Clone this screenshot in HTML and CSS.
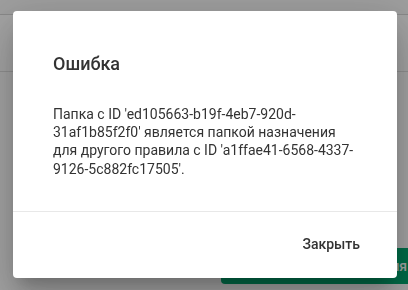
FILE: index.html
```html
<!DOCTYPE html>
<html>
<head>
	<meta charset="utf-8">
	<title>Ошибка</title>
	<link rel="stylesheet" href="styles.css">
</head>
<body>
	<div class="page">
		<div class="top-bar"></div>
		<div class="toolbar"></div>
		<div class="content"></div>
		<div class="page-actions">
			<button class="save-btn">Сохранить изменения</button>
		</div>
	</div>

	<div class="overlay">
		<div class="dialog">
			<h2 class="dialog-title">Ошибка</h2>
			<div class="dialog-body">
				Папка с ID 'ed105663-b19f-4eb7-920d-<wbr>31af1b85f2f0' является папкой назначения для другого правила с ID 'a1ffae41-6568-4337-<wbr>9126-5c882fc17505'.
			</div>
			<div class="dialog-actions">
				<button class="close-btn">Закрыть</button>
			</div>
		</div>
	</div>
</body>
</html>
```

FILE: styles.css
```css
html, body {
	margin: 0;
	height: 100%;
	overflow: hidden;
}
body {
	font-family: Roboto, "Liberation Sans", sans-serif;
	background: #fff;
}

.page {
	height: 100%;
	display: flex;
	flex-direction: column;
}
.top-bar {
	height: 14px;
	background: #f7f7f7;
	border-bottom: 1px solid #d6d6d6;
}
.toolbar {
	height: 56px;
	border-bottom: 1px solid #e0e0e0;
}
.content {
	height: 176px;
}
.page-actions {
	display: flex;
	padding-left: 221px;
}
.save-btn {
	flex: none;
	width: 187px;
	height: 36px;
	border: 0;
	border-radius: 4px 0 0 4px;
	background: #00a870;
	color: #fff;
	font-family: Roboto, sans-serif;
	font-size: 14px;
	font-weight: 500;
	text-align: right;
	padding: 0 1px 0 0;
	white-space: nowrap;
}

.overlay {
	position: fixed;
	inset: 0;
	background: rgba(0, 0, 0, 0.36);
}
.dialog {
	position: absolute;
	left: 13px;
	top: 11px;
	width: 384px;
	background: #fff;
	border-radius: 4px;
	box-shadow: 0 11px 15px -7px rgba(0, 0, 0, .2), 0 24px 38px 3px rgba(0, 0, 0, .14), 0 9px 46px 8px rgba(0, 0, 0, .12);
	color: #333;
}
.dialog-title {
	margin: 0;
	padding: 41px 40px 0;
	font-size: 18px;
	line-height: 24px;
	font-weight: 500;
}
.dialog-body {
	padding: 29px 40px 33px;
	font-size: 14px;
	line-height: 18.2px;
	border-bottom: 1px solid #e8e8e8;
}
.dialog-actions {
	display: flex;
	justify-content: flex-end;
	padding: 14px 29px 16px;
}
.close-btn {
	height: 36px;
	padding: 0 8px;
	border: 0;
	background: none;
	color: #333;
	font-family: Roboto, sans-serif;
	font-size: 14px;
	font-weight: 500;
	cursor: pointer;
}
```
